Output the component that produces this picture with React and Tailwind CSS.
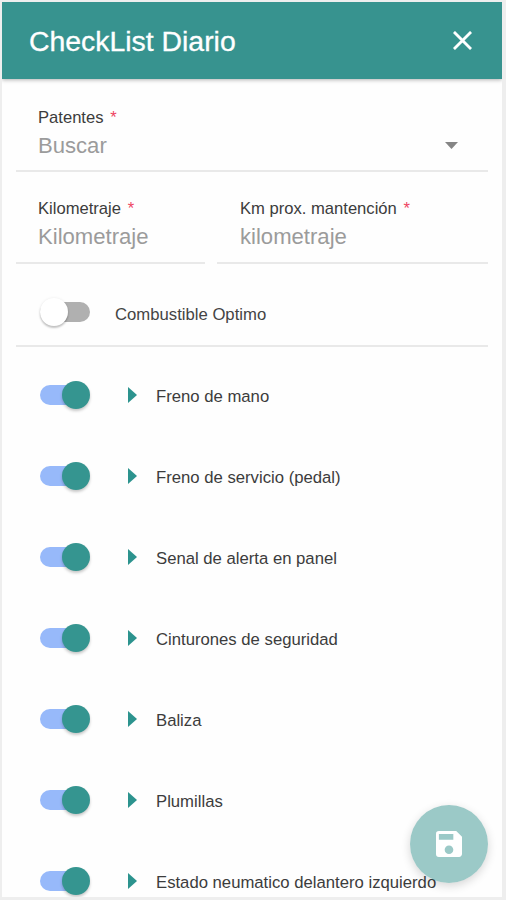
const ITEMS = [
  'Freno de mano',
  'Freno de servicio (pedal)',
  'Senal de alerta en panel',
  'Cinturones de seguridad',
  'Baliza',
  'Plumillas',
  'Estado neumatico delantero izquierdo',
];

function Toggle({ on }) {
  return (
    <div className={`flex h-5 w-[50px] shrink-0 items-center rounded-full ${on ? 'justify-end bg-[linear-gradient(to_right,#97b9fa_42px,transparent_42px)]' : 'justify-start bg-[#b0b0b0]'}`}>
      <div className={`size-7 shrink-0 rounded-full ${on ? 'bg-[#359590] shadow-[0_2px_3px_rgba(0,0,0,0.22)]' : 'bg-white shadow-[0_2px_2px_rgba(0,0,0,0.22),0_0_3px_rgba(0,0,0,0.08)]'}`} />
    </div>
  );
}

function Field({ label, placeholder, className, children }) {
  return (
    <div className={`flex justify-between border-b-2 border-[#e9e9e9] ${className}`}>
      <div>
        <div className="text-[16.6px] leading-5 text-[#3c3c3c]">
          {label} <span className="ml-[2px] text-[#ee4562]">*</span>
        </div>
        <div className="mt-[5px] text-[22.1px] leading-[26px] text-[#9b9b9b]">{placeholder}</div>
      </div>
      {children}
    </div>
  );
}

export default function App() {
  return (
    <div className="h-[900px] w-[506px] overflow-hidden bg-[#eeeeee] pl-[2px] pt-[2px] font-['Liberation_Sans',Arial,sans-serif]">
      <div className="relative h-[895px] w-[500px] overflow-hidden bg-[#fefefe]">
        <header className="flex h-[77px] items-center justify-between bg-[#37938f] pl-[27px] pr-[30px] text-white shadow-[0_1px_4px_rgba(0,0,0,0.3)]">
          <h1 className="text-[28.4px] leading-8 [-webkit-text-stroke:0.3px_white]">CheckList Diario</h1>
          <svg className="size-[19px]" viewBox="0 0 20 20" fill="none" stroke="currentColor" strokeWidth="3">
            <path d="M1 1 19 19M19 1 1 19" />
          </svg>
        </header>
        <main className="pl-[14px]">
          <Field label="Patentes" placeholder="Buscar" className="mt-[29px] h-[64px] w-[472px] pl-[22px]">
            <svg className="mr-[30px] mt-[34px] h-[7px] w-[13px]" viewBox="0 0 13 7">
              <path d="M0 0h13L6.5 7z" fill="#858585" />
            </svg>
          </Field>
          <div className="mt-[27px] flex gap-3">
            <Field label="Kilometraje" placeholder="Kilometraje" className="h-[65px] w-[189px] pl-[22px]" />
            <Field label="Km prox. mantención" placeholder="kilometraje" className="h-[65px] w-[271px] pl-[23px]" />
          </div>
          <div className="flex h-[83px] w-[472px] items-center border-b-2 border-[#e9e9e9] pl-6 pt-[14px]">
            <Toggle />
            <span className="ml-[25px] mt-[6px] text-[16.7px] leading-5 text-[#444444]">Combustible Optimo</span>
          </div>
          <ul className="mt-[7px]">
            {ITEMS.map((item) => (
              <li key={item} className="flex h-[81px] items-center pl-6">
                <Toggle on />
                <svg className="ml-[38px] h-4 w-[9px]" viewBox="0 0 9 16">
                  <path d="M0 0 9 8 0 16z" fill="#2c938e" />
                </svg>
                <span className="ml-[19px] mt-[5px] whitespace-nowrap text-[16.7px] leading-5 text-[#3c3c3c]">{item}</span>
              </li>
            ))}
          </ul>
        </main>
        <button aria-label="Guardar" className="absolute bottom-[14px] right-[14px] flex size-[78px] items-center justify-center rounded-full bg-[#37938f]/50 shadow-[0_3px_10px_rgba(0,0,0,0.16)]">
          <svg className="size-[26px]" viewBox="3 3 18 18" fill="white">
            <path d="M17 3H5a2 2 0 0 0-2 2v14a2 2 0 0 0 2 2h14c1.100 0 2-.9 2-2V7l-4-4zm-5 16c-1.660 0-3-1.340-3-3s1.340-3 3-3 3 1.340 3 3-1.340 3-3 3zm3-10H5V5h10v4z" />
          </svg>
        </button>
      </div>
    </div>
  );
}
